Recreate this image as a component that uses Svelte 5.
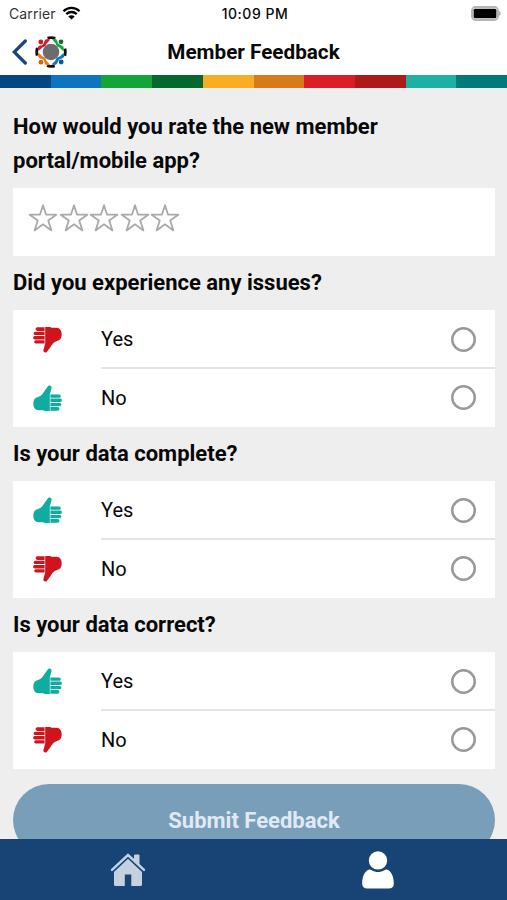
<script>
  const stripes = [
    "#024684", "#0d74bd", "#14a438", "#04682f", "#f9ad24",
    "#d67b19", "#dc1c26", "#ae1a18", "#1db0a3", "#017a79",
  ];

  const questions = [
    { id: "issues", title: "Did you experience any issues?", yesIsGood: false },
    { id: "complete", title: "Is your data complete?", yesIsGood: true },
    { id: "correct", title: "Is your data correct?", yesIsGood: true },
  ];

  // body and head colour of each figure in the logo, clockwise from top left
  const figures = [
    ["#d9182d", "#c4202c"],
    ["#1fa548", "#087238"],
    ["#1477c2", "#10569b"],
    ["#e07f1e", "#c76a17"],
  ];

  let rating = 0;
  let answers = {};
</script>

{#snippet thumb(up)}
  <svg class="thumb" class:down={!up} viewBox="0 0 29 27">
    <path d="M15.4 .8C17.2 0 19 1.1 18.6 3L16.8 9.6V26H11.8L10.4 25.3H5.5C2 25.3 .3 22.3 .3 18.6C.3 14.8 2 12.6 5 12C8.5 11 10 8.5 12 5.3Z" />
    <path d="M17.4 9.6H26.2a1.5 1.5 0 0 1 0 3.2H17.4zM17.4 13.6H27.2a1.6 1.6 0 0 1 0 3.5H17.4zM17.4 17.9H26.7a1.55 1.55 0 0 1 0 3.4H17.4zM17.4 22.1H24.6a1.6 1.6 0 0 1 0 3.6H17.4z" />
  </svg>
{/snippet}

<div class="screen">
  <div class="status">
    <div class="carrier">
      <span>Carrier</span>
      <svg class="wifi" width="19" height="14" viewBox="0 0 18 14">
        <path d="M1 5.2C5.5 .7 12.5 .7 17 5.2M3.8 8.1C6.7 5.3 11.3 5.3 14.2 8.1" />
        <path class="dot" d="M9 13.5L5.8 10.5C7.5 8.9 10.5 8.9 12.2 10.5Z" />
      </svg>
    </div>
    <span class="time">10:09 PM</span>
    <svg class="battery" width="30" height="15" viewBox="0 0 30 15">
      <rect class="shell" x="1" y="1" width="26" height="13" rx="3.7" />
      <rect x="2.6" y="2.8" width="22.8" height="9.4" rx="1.5" />
      <path class="tip" d="M28 5c2.4 .7 2.4 4.1 0 4.8z" />
    </svg>
  </div>

  <header>
    <div class="brand">
      <svg class="back" width="16" height="26" viewBox="0 0 16 26">
        <path d="M13.3 2L2.2 13L13.3 24" />
      </svg>
      <svg width="32" height="32" viewBox="0 0 32 32">
        <circle class="ring" cx="16" cy="16" r="14.3" />
        {#each figures as [body, head], i}
          <g transform="rotate({i * 90} 16 16)">
            <path fill={body} d="M3.6 14.8C1.8 12.3 2.8 10 5.2 9.6C8 9 8.6 7.8 9.4 5.4C10.2 3 13 2.4 15.2 3.8L11.6 7.6C11.2 9.6 9.6 11 7.8 11.2Z" />
            <circle fill={head} cx="5.8" cy="6" r="2.4" />
          </g>
        {/each}
        <circle fill="#6b6c6e" cx="16" cy="16" r="8.3" />
      </svg>
    </div>
    <h1>Member Feedback</h1>
  </header>

  <div class="stripes">
    {#each stripes as color}
      <span style="background: {color}"></span>
    {/each}
  </div>

  <main>
    <h2>How would you rate the new member portal/mobile app?</h2>
    <div class="card stars">
      {#each [1, 2, 3, 4, 5] as n}
        <button class="star" class:on={n <= rating} aria-label="{n} stars" on:click={() => (rating = n)}>
          <svg width="30" height="30" viewBox="0 0 30 30">
            <path d="M15 2.2L18.1 11.7H28.3L20.2 17.5L23.4 27.4L15 21.3L6.6 27.4L9.8 17.5L1.7 11.7H11.9Z" />
          </svg>
        </button>
      {/each}
    </div>

    {#each questions as q}
      <h2>{q.title}</h2>
      <div class="card">
        {#each ["Yes", "No"] as option}
          <label class="option">
            {@render thumb((option === "Yes") === q.yesIsGood)}
            <span class="line">
              {option}
              <input type="radio" name={q.id} value={option} bind:group={answers[q.id]} />
            </span>
          </label>
        {/each}
      </div>
    {/each}

    <button class="submit">Submit Feedback</button>
  </main>

  <nav>
    <span class="tab">
      <svg class="home" width="36" height="34" viewBox="0 0 36 34">
        <path d="M4 18.5L18 5L32 18.5V31.5Q32 33 30.5 33H21.3V21.5H14.8V33H5.5Q4 33 4 31.5Z" />
        <path class="gap" d="M2 17.5L18 2.6L34 17.5" />
        <path d="M24 2.5Q24 1.5 25 1.5H28.5Q29.5 1.5 29.5 2.5V12L24 7Z" />
        <path class="roof" d="M2 16.9L18 2L34 16.9" />
      </svg>
    </span>
    <span class="tab">
      <svg width="34" height="38" viewBox="0 0 34 38">
        <path d="M8.5 18.5C10.5 18.5 12 21 17 21S23.5 18.5 25.5 18.5C30.5 19.5 32.8 26 32.8 32.5Q32.8 37.5 27.5 37.5H6.5Q1.2 37.5 1.2 32.5C1.2 26 3.5 19.5 8.5 18.5Z" />
        <circle cx="17" cy="9.4" r="9.2" />
      </svg>
    </span>
  </nav>
</div>

<style>
  :global(body) {
    margin: 0;
  }

  .screen {
    display: flex;
    flex-direction: column;
    width: 507px;
    height: 900px;
    overflow: hidden;
    background: #fff;
    color: #080808;
    font-family: Roboto, "Liberation Sans", sans-serif;
  }

  .status {
    display: grid;
    grid-template-columns: 1fr auto 1fr;
    align-items: center;
    flex: none;
    height: 27px;
    padding: 0 6px 0 9px;
    box-sizing: border-box;
    font-family: Inter, sans-serif;
    font-size: 14px;
  }

  .carrier {
    display: flex;
    align-items: center;
    gap: 6px;
    color: #333;
    letter-spacing: 0.1px;
  }

  .wifi {
    margin-top: -1px;
    fill: none;
    stroke: #000;
    stroke-width: 2.3;
  }

  .wifi .dot {
    fill: #000;
    stroke: none;
  }

  .time {
    font-weight: 500;
    letter-spacing: 0.5px;
  }

  .battery {
    justify-self: end;
  }

  .shell {
    fill: none;
    stroke: #b4b4b4;
    stroke-width: 2;
  }

  .tip {
    fill: #b4b4b4;
  }

  header {
    display: grid;
    grid-template-columns: 1fr auto 1fr;
    align-items: center;
    flex: none;
    height: 48px;
  }

  .brand {
    display: flex;
    align-items: center;
    gap: 7px;
    padding: 1px 0 0 12px;
  }

  .back {
    fill: none;
    stroke: #174779;
    stroke-width: 3.2;
    stroke-linecap: round;
  }

  .ring {
    fill: none;
    stroke: #111;
    stroke-width: 2.8;
    stroke-dasharray: 8 14.46;
    stroke-dashoffset: 4;
  }

  h1 {
    margin: 0;
    padding-top: 2px;
    font-size: 20.7px;
    font-weight: 700;
  }

  .stripes {
    display: flex;
    flex: none;
    height: 13px;
  }

  .stripes span {
    flex: 1;
  }

  main {
    flex: 1;
    min-height: 0;
    overflow: hidden;
    padding: 22px 12px 0 13px;
    background: #eee;
  }

  h2 {
    margin: 0 0 10px;
    max-width: 400px;
    font-size: 22px;
    font-weight: 700;
    line-height: 34px;
  }

  .card {
    margin-bottom: 10px;
    background: #fff;
  }

  .stars {
    display: flex;
    align-items: flex-start;
    height: 68px;
    padding: 15px 15px 0;
    box-sizing: border-box;
  }

  .star {
    width: 30.6px;
    height: 30px;
    padding: 0;
    border: none;
    background: none;
    cursor: pointer;
  }

  .star svg {
    display: block;
    fill: none;
    stroke: #aaa;
    stroke-width: 1.8;
    stroke-linejoin: round;
  }

  .star.on svg {
    fill: #f9ad24;
  }

  .option {
    display: flex;
    align-items: center;
    height: 58.5px;
    padding-left: 20px;
    font-size: 20px;
    cursor: pointer;
  }

  .thumb {
    width: 29px;
    height: 27px;
    margin: 1px 39px 0 0;
    fill: #0fada1;
  }

  .thumb.down {
    margin-top: 0;
    fill: #d0141d;
    transform: rotate(180deg);
  }

  .line {
    display: flex;
    flex: 1;
    align-items: center;
    justify-content: space-between;
    height: 100%;
    padding-right: 19px;
    box-sizing: border-box;
  }

  .option:first-child .line {
    box-shadow: inset 0 -2px #e4e4e4;
  }

  input {
    appearance: none;
    width: 25px;
    height: 25px;
    margin: 0;
    border-radius: 50%;
    box-shadow: inset 0 0 0 2.5px #999;
  }

  input:checked {
    background: #174779;
  }

  .submit {
    display: block;
    width: 100%;
    height: 72px;
    margin-top: 15px;
    border: none;
    border-radius: 36px;
    background: #789eb9;
    color: #e1eaf4;
    font-family: inherit;
    font-size: 22px;
    font-weight: 700;
  }

  nav {
    display: flex;
    align-items: center;
    flex: none;
    height: 61px;
    padding: 0 4px 0 3px;
    background: #174475;
    fill: #fff;
  }

  .tab {
    display: flex;
    flex: 1;
    justify-content: center;
  }

  .home {
    fill: #c5d1de;
  }

  .home .roof,
  .home .gap {
    fill: none;
    stroke: #c5d1de;
    stroke-width: 2.4;
    stroke-linecap: round;
  }

  .home .gap {
    stroke: #174475;
    stroke-width: 4.8;
  }
</style>
